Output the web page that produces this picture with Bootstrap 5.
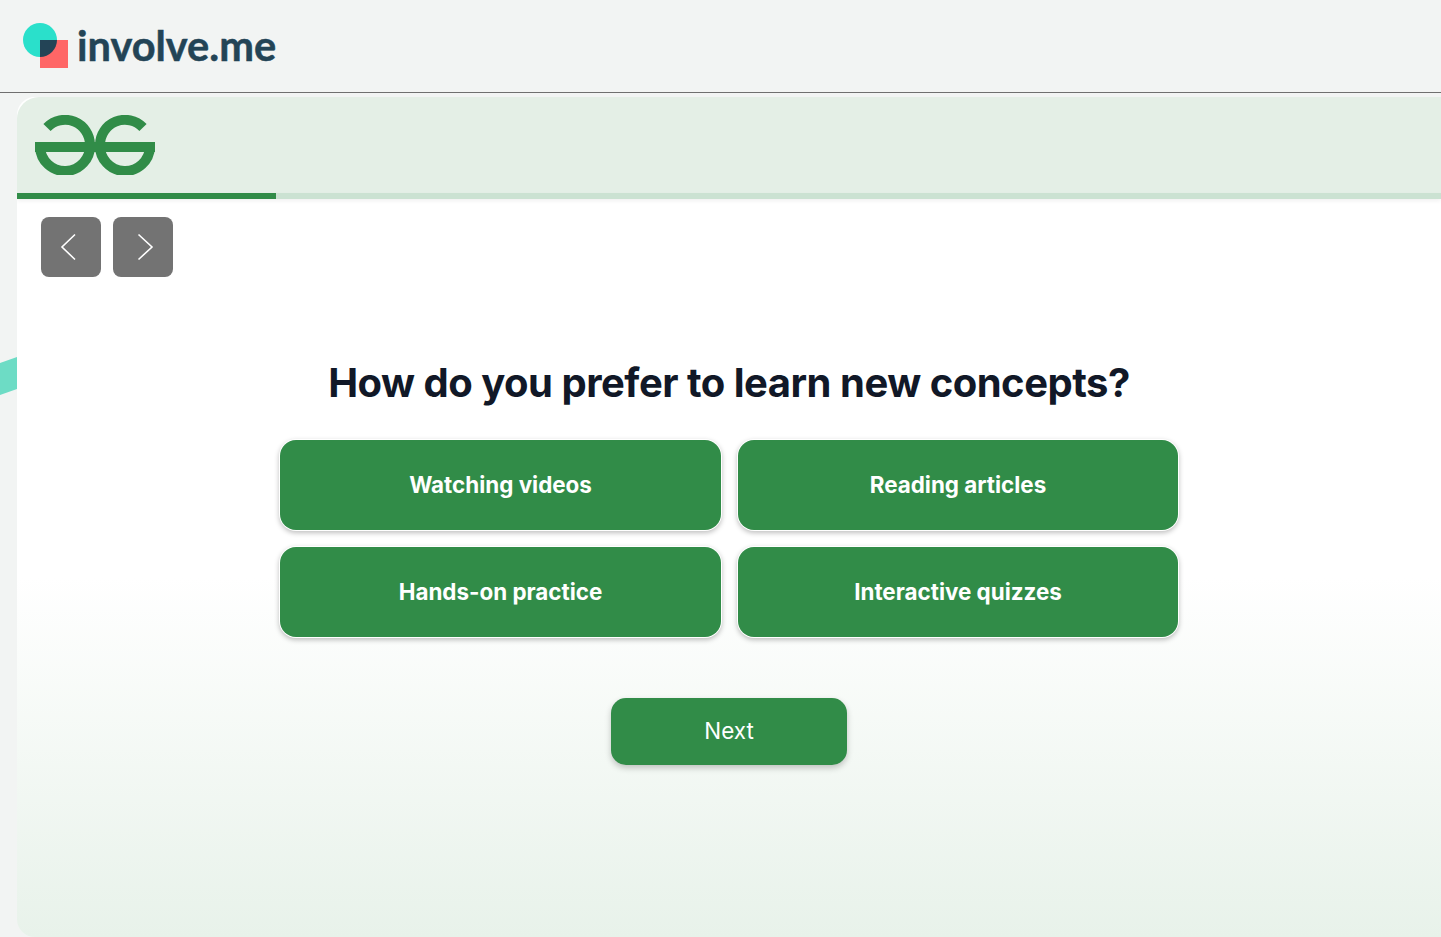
<!DOCTYPE html>
<html lang="en">
<head>
  <meta charset="UTF-8" />
  <meta name="viewport" content="width=device-width, initial-scale=1" />
  <title>involve.me quiz</title>
  <link href="https://cdn.jsdelivr.net/npm/bootstrap@5.3.0/dist/css/bootstrap.min.css" rel="stylesheet">
  <style>
    html, body {
      height: 100%;
    }
    body {
      background: #f2f4f3;
      overflow: hidden;
      font-family: Inter, "Liberation Sans", sans-serif;
    }
    .top-bar {
      height: 93px;
      padding: 0 0 2px 22px;
      border-bottom: 1px solid #6f6f6f;
    }
    .brand-name {
      font-family: Lato, "Liberation Sans", sans-serif;
      font-weight: 700;
      font-size: 41.5px;
      line-height: 1;
      color: #234456;
      -webkit-text-stroke: 0.5px #234456;
      margin-left: 8px;
      margin-top: 1px;
    }
    .stage {
      height: 844px;
      padding: 4px 0 0 17px;
      position: relative;
    }
    .teal-shape {
      position: absolute;
      left: 0;
      top: 264px;
    }
    .quiz-panel {
      position: relative;
      height: 840px;
      border-radius: 18px 0 0 18px;
      overflow: hidden;
      background: linear-gradient(#fff 0, #fff 480px, #e8f2ea 100%);
    }
    .panel-head {
      height: 96px;
      background: #e4efe6;
      border-top-left-radius: 22px;
      padding: 18px 0 0 18px;
    }
    .progress-track {
      height: 6px;
      background: #cbe2d2;
      box-shadow: 0 2px 4px rgba(0, 0, 0, 0.06);
    }
    .progress-done {
      height: 6px;
      background: #318c48;
    }
    .nav-btns {
      padding: 18px 0 0 24px;
      gap: 12px;
    }
    .arrow-btn {
      width: 60px;
      height: 60px;
      padding: 0;
      border: 0;
      border-radius: 8px;
      background: #737373;
    }
    .arrow-btn svg {
      display: block;
    }
    .quiz-title {
      margin: 80px 0 31px;
      font-family: Inter, "Liberation Sans", sans-serif;
      font-size: 40px;
      font-weight: 700;
      letter-spacing: -0.5px;
      line-height: 52px;
      color: #111827;
      text-align: center;
    }
    .answer-grid {
      display: grid;
      grid-template-columns: 441px 440px;
      grid-auto-rows: 90px;
      gap: 17px;
      justify-content: center;
    }
    .answer-btn {
      border: 0;
      border-radius: 16px;
      background: #318c48;
      color: #fff;
      font-size: 22.4px;
      font-weight: 700;
      box-shadow: 0 0 0 1px #fff, 0 2px 5px 1px rgba(0, 0, 0, 0.25);
    }
    .next-btn {
      width: 236px;
      height: 67px;
      margin-top: 61px;
      padding-bottom: 8px;
      border: 0;
      border-radius: 15px;
      background: #318c48;
      color: #fff;
      font-size: 22.4px;
      font-weight: 400;
      box-shadow: 0 3px 6px rgba(0, 0, 0, 0.22);
    }
  </style>
</head>
<body>

<header class="top-bar d-flex align-items-center">
  <svg width="47" height="47" viewBox="0 0 47 47" aria-hidden="true">
    <circle cx="18" cy="18" r="17" fill="#2ae0cb"/>
    <rect x="18" y="18" width="28" height="28" fill="#ff6666"/>
    <path d="M18 18H35A17 17 0 0 1 18 35Z" fill="#234456"/>
  </svg>
  <span class="brand-name">involve.me</span>
</header>

<div class="stage">
  <svg class="teal-shape" width="17" height="42" viewBox="0 0 17 42" aria-hidden="true">
    <polygon points="0,6 17,0 17,32 0,38" fill="#6ddcc5"/>
  </svg>

  <main class="quiz-panel">
    <div class="panel-head">
      <svg width="120" height="60" viewBox="0 0 120 60" class="d-block" aria-hidden="true">
        <g fill="none" stroke="#318c48" stroke-width="10">
          <path d="M12 12.5A25 25 0 0 1 55 30A25 25 0 0 1 5 32"/>
          <path d="M108 12.5A25 25 0 0 0 65 30A25 25 0 0 0 115 32"/>
        </g>
        <rect x="0" y="27" width="120" height="10" fill="#318c48"/>
      </svg>
    </div>
    <div class="progress-track">
      <div class="progress-done" style="width: 259px"></div>
    </div>

    <div class="nav-btns d-flex">
      <button class="arrow-btn btn" type="button" aria-label="Back">
        <svg width="60" height="60" viewBox="0 0 60 60" fill="none" stroke="#fff" stroke-width="1.6">
          <path d="M34 17.5L21 30L34 42.5"/>
        </svg>
      </button>
      <button class="arrow-btn btn" type="button" aria-label="Forward">
        <svg width="60" height="60" viewBox="0 0 60 60" fill="none" stroke="#fff" stroke-width="1.6">
          <path d="M25.5 17.5L39 30L25.5 42.5"/>
        </svg>
      </button>
    </div>

    <h1 class="quiz-title">How do you prefer to learn new concepts?</h1>

    <div class="answer-grid">
      <button class="answer-btn btn" type="button">Watching videos</button>
      <button class="answer-btn btn" type="button">Reading articles</button>
      <button class="answer-btn btn" type="button">Hands-on practice</button>
      <button class="answer-btn btn" type="button">Interactive quizzes</button>
    </div>

    <div class="d-flex justify-content-center">
      <button class="next-btn btn" type="button">Next</button>
    </div>
  </main>
</div>

<script src="https://cdn.jsdelivr.net/npm/bootstrap@5.3.0/dist/js/bootstrap.bundle.min.js"></script>
</body>
</html>
